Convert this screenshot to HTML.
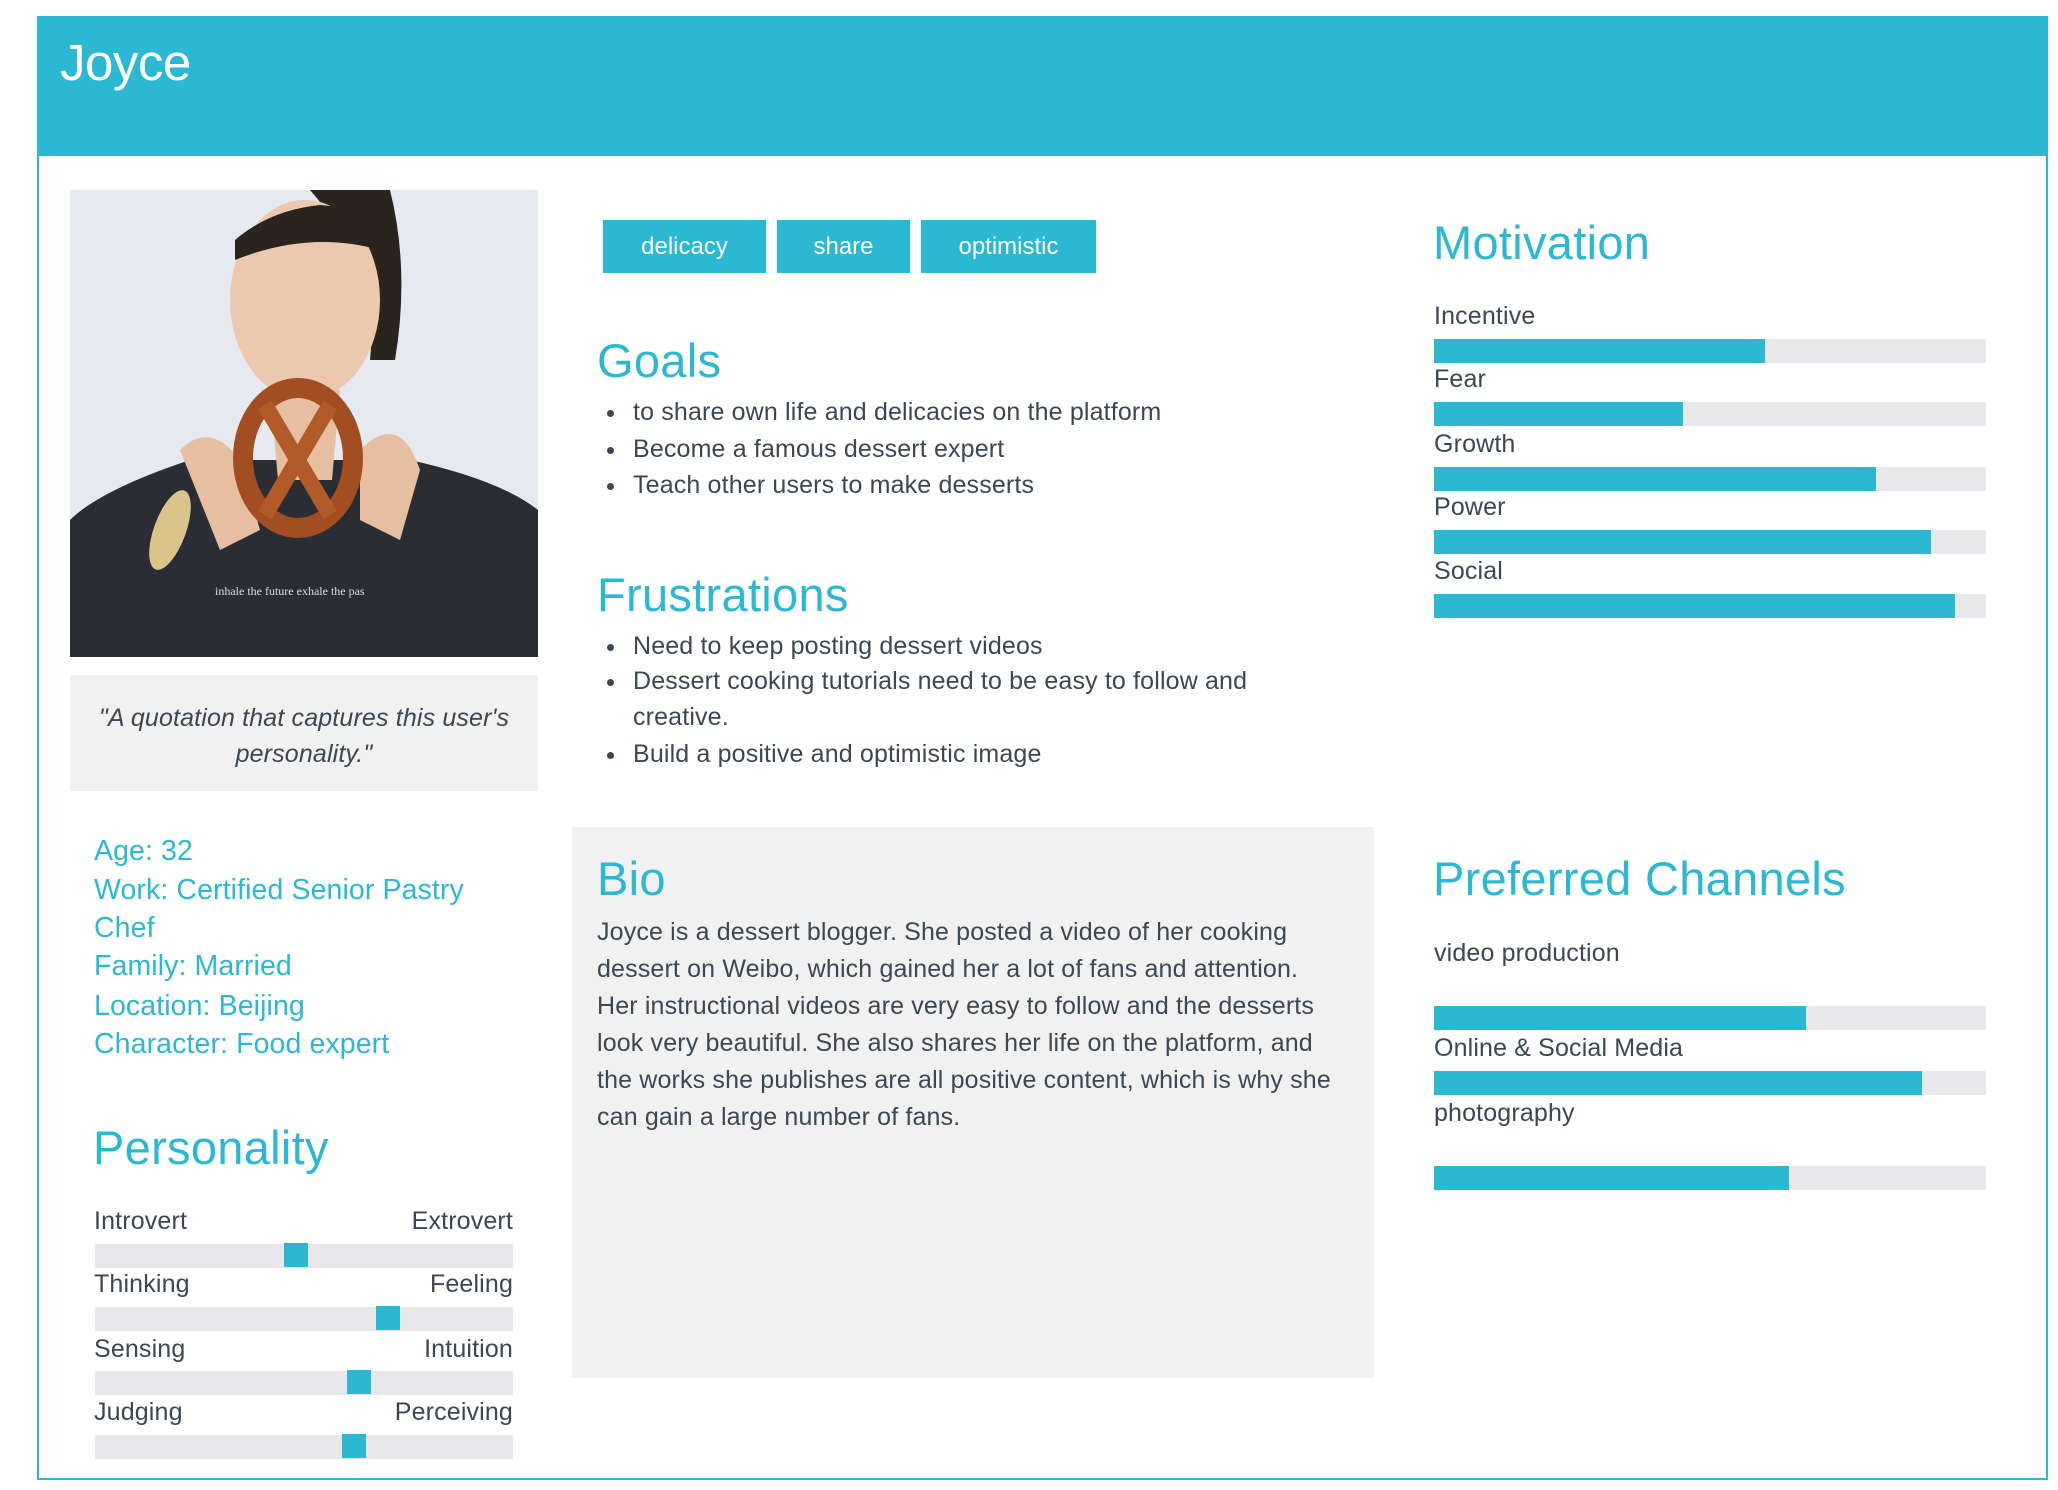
<!DOCTYPE html>
<html><head><meta charset="utf-8"><style>
*{margin:0;padding:0;box-sizing:border-box}
body{width:2058px;height:1490px;background:#fff;position:relative;overflow:hidden;font-family:"Liberation Sans",sans-serif;color:#3b4752}
.a{position:absolute;white-space:nowrap}
.frame{position:absolute;left:37px;top:16px;width:2011px;height:1464px;border:2px solid #2bb8d3}
.hdr{position:absolute;left:37px;top:16px;width:2011px;height:140px;background:#2bb8d3}
.h{color:#2bb8d3;font-size:47px;letter-spacing:0.3px;line-height:50px}
.t{font-size:25px;line-height:30px;letter-spacing:0.15px}
.tag{position:absolute;top:220px;height:53px;background:#2bb8d3;color:#fff;font-size:24px;line-height:53px;text-align:center}
.bar{position:absolute;height:24px;background:#e8e8ea}
.bar i{position:absolute;left:0;top:0;bottom:0;background:#2bb8d3}
.info{color:#2bb8d3;font-size:28.5px;line-height:38px;letter-spacing:0.1px}
.dot{position:absolute;width:7px;height:7px;border-radius:50%;background:#3b4752}
.mk{position:absolute;width:24px;height:24px;background:#2bb8d3}
</style></head><body>
<div class="frame"></div>
<div class="hdr"></div>
<div class="a" style="left:60px;top:34px;color:#fff;font-size:51px;line-height:58px;letter-spacing:-0.5px">Joyce</div>

<svg class="a" style="left:70px;top:190px" width="468" height="467" viewBox="0 0 468 467">
<rect width="468" height="467" fill="#e6eaf0"/>
<path d="M0 330 Q30 300 120 270 L340 270 Q430 290 468 320 L468 467 L0 467Z" fill="#2a2d33"/>
<path d="M240 0 L320 0 Q340 80 325 170 L300 170 Q310 80 240 0Z" fill="#2a241f"/>
<ellipse cx="235" cy="110" rx="75" ry="100" fill="#ecc9ae"/>
<path d="M165 50 Q200 20 250 15 L300 20 L310 60 Q240 40 165 70Z" fill="#2a241f"/>
<path d="M200 200 L270 200 L262 290 L208 290Z" fill="#e6bfa2"/>
<path d="M110 260 Q140 230 170 270 L190 340 L150 360Z" fill="#e6bfa2"/>
<path d="M290 260 Q330 220 350 280 L330 350 L290 330Z" fill="#e6bfa2"/>
<ellipse cx="228" cy="268" rx="55" ry="70" fill="none" stroke="#a24e22" stroke-width="20"/>
<path d="M195 215 L260 325 M260 215 L195 325" stroke="#b25a28" stroke-width="16"/>
<ellipse cx="100" cy="340" rx="16" ry="42" fill="#d9c48a" transform="rotate(20 100 340)"/>
<text x="145" y="405" fill="#ddd" font-size="12" font-family="Liberation Serif">inhale the future exhale the pas</text>
</svg>

<div class="a" style="left:70px;top:675px;width:468px;height:116px;background:#f1f1f1"></div>
<div class="a t" style="left:70px;top:700px;width:468px;text-align:center;font-style:italic;line-height:36px;white-space:normal;padding:0 20px">"A quotation that captures this user's personality."</div>

<div class="a info" style="left:94px;top:832px">Age: 32</div>
<div class="a info" style="left:94px;top:871px">Work: Certified Senior Pastry</div>
<div class="a info" style="left:94px;top:909px">Chef</div>
<div class="a info" style="left:94px;top:947px">Family: Married</div>
<div class="a info" style="left:94px;top:987px">Location: Beijing</div>
<div class="a info" style="left:94px;top:1025px">Character: Food expert</div>

<div class="a h" style="left:93px;top:1123px">Personality</div>
<div class="a t" style="left:94px;top:1206px">Introvert</div><div class="a t" style="left:300px;width:213px;text-align:right;top:1206px">Extrovert</div>
<div class="bar" style="left:95px;top:1244px;width:418px"></div><div class="mk" style="left:284px;top:1243px"></div>
<div class="a t" style="left:94px;top:1269px">Thinking</div><div class="a t" style="left:300px;width:213px;text-align:right;top:1269px">Feeling</div>
<div class="bar" style="left:95px;top:1307px;width:418px"></div><div class="mk" style="left:376px;top:1306px"></div>
<div class="a t" style="left:94px;top:1334px">Sensing</div><div class="a t" style="left:300px;width:213px;text-align:right;top:1334px">Intuition</div>
<div class="bar" style="left:95px;top:1371px;width:418px"></div><div class="mk" style="left:347px;top:1370px"></div>
<div class="a t" style="left:94px;top:1397px">Judging</div><div class="a t" style="left:300px;width:213px;text-align:right;top:1397px">Perceiving</div>
<div class="bar" style="left:95px;top:1435px;width:418px"></div><div class="mk" style="left:342px;top:1434px"></div>

<div class="tag" style="left:603px;width:163px">delicacy</div>
<div class="tag" style="left:777px;width:133px">share</div>
<div class="tag" style="left:921px;width:175px">optimistic</div>

<div class="a h" style="left:597px;top:336px">Goals</div>
<div class="dot" style="left:607px;top:410px"></div><div class="a t" style="left:633px;top:397px">to share own life and delicacies on the platform</div>
<div class="dot" style="left:607px;top:447px"></div><div class="a t" style="left:633px;top:434px">Become a famous dessert expert</div>
<div class="dot" style="left:607px;top:483px"></div><div class="a t" style="left:633px;top:470px">Teach other users to make desserts</div>

<div class="a h" style="left:597px;top:570px">Frustrations</div>
<div class="dot" style="left:607px;top:644px"></div><div class="a t" style="left:633px;top:631px">Need to keep posting dessert videos</div>
<div class="dot" style="left:607px;top:679px"></div><div class="a t" style="left:633px;top:666px">Dessert cooking tutorials need to be easy to follow and</div>
<div class="a t" style="left:633px;top:702px">creative.</div>
<div class="dot" style="left:607px;top:752px"></div><div class="a t" style="left:633px;top:739px">Build a positive and optimistic image</div>

<div class="a" style="left:572px;top:827px;width:802px;height:551px;background:#f1f1f1"></div>
<div class="a h" style="left:597px;top:854px">Bio</div>
<div class="a t" style="left:597px;top:914px;line-height:37px">Joyce is a dessert blogger. She posted a video of her cooking<br>dessert on Weibo, which gained her a lot of fans and attention.<br>Her instructional videos are very easy to follow and the desserts<br>look very beautiful. She also shares her life on the platform, and<br>the works she publishes are all positive content, which is why she<br>can gain a large number of fans.</div>

<div class="a h" style="left:1433px;top:218px">Motivation</div>
<div class="a t" style="left:1434px;top:301px">Incentive</div>
<div class="bar" style="left:1434px;top:339px;width:552px"><i style="width:331px"></i></div>
<div class="a t" style="left:1434px;top:364px">Fear</div>
<div class="bar" style="left:1434px;top:402px;width:552px"><i style="width:249px"></i></div>
<div class="a t" style="left:1434px;top:429px">Growth</div>
<div class="bar" style="left:1434px;top:467px;width:552px"><i style="width:442px"></i></div>
<div class="a t" style="left:1434px;top:492px">Power</div>
<div class="bar" style="left:1434px;top:530px;width:552px"><i style="width:497px"></i></div>
<div class="a t" style="left:1434px;top:556px">Social</div>
<div class="bar" style="left:1434px;top:594px;width:552px"><i style="width:521px"></i></div>

<div class="a h" style="left:1433px;top:854px">Preferred Channels</div>
<div class="a t" style="left:1434px;top:938px">video production</div>
<div class="bar" style="left:1434px;top:1006px;width:552px"><i style="width:372px"></i></div>
<div class="a t" style="left:1434px;top:1033px">Online &amp; Social Media</div>
<div class="bar" style="left:1434px;top:1071px;width:552px"><i style="width:488px"></i></div>
<div class="a t" style="left:1434px;top:1098px">photography</div>
<div class="bar" style="left:1434px;top:1166px;width:552px"><i style="width:355px"></i></div>
</body></html>
